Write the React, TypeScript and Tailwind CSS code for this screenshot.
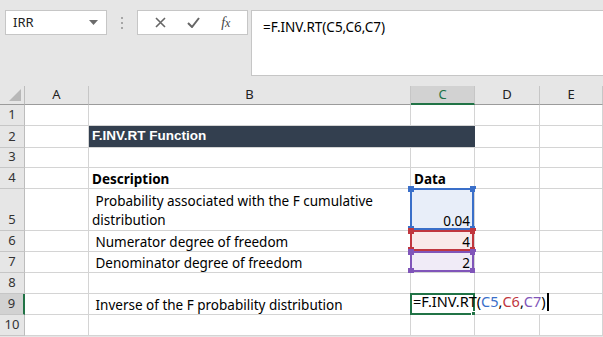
import React from 'react';

const cellFont = { fontFamily: '"Noto Sans", "Open Sans", sans-serif' };

const Corner = ({ pos, color }: { pos: string; color: string }) => (
  <span className={`absolute w-[6px] h-[6px] ${pos} ${color}`} />
);

const RangeBox = ({ border, fill, dot }: { border: string; fill: string; dot: string }) => (
  <div className={`absolute -left-[1px] -top-[1px] -right-[0px] -bottom-[0px] border-2 ${border} ${fill}`}>
    <Corner pos="-left-[4px] -top-[4px]" color={dot} />
    <Corner pos="-right-[4px] -top-[4px]" color={dot} />
    <Corner pos="-left-[4px] -bottom-[4px]" color={dot} />
    <Corner pos="-right-[4px] -bottom-[4px]" color={dot} />
  </div>
);

export default function App() {
  const rows = [1, 2, 3, 4, 5, 6, 7, 8, 9, 10];

  const rowHeader = (n: number) => (
    <div
      key={`h${n}`}
      className={`flex items-end justify-center pb-[1px] text-[13px] text-[#333] border-b border-[#c6c6c6] ${
        n === 9 ? 'bg-[#d2d2d2] border-r-2 border-r-[#217346]' : 'bg-[#e6e6e6] border-r border-r-[#bdbdbd]'
      }`}
      style={cellFont}
    >
      {n}
    </div>
  );

  const cell = (key: string, children?: React.ReactNode, extra = '') => (
    <div key={key} className={`relative border-r border-b border-[#d4d4d4] bg-white ${extra}`}>
      {children}
    </div>
  );

  const cells: React.ReactNode[] = [];
  rows.forEach((n) => {
    cells.push(rowHeader(n));
    // A
    cells.push(cell(`a${n}`));
    // B
    if (n === 2) {
      cells.push(
        <div
          key="b2"
          className="col-span-2 flex items-center pl-[3px] bg-[#333f4f] text-white font-bold text-[13.5px] border-b border-[#d4d4d4]"
          style={{ fontFamily: '"Liberation Sans", Arial, sans-serif' }}
        >
          F.INV.RT Function
        </div>
      );
    } else {
      let content: React.ReactNode = null;
      if (n === 4) content = <span className="font-bold">Description</span>;
      if (n === 5)
        content = (
          <span className="leading-[19px] block">
            &nbsp;Probability associated with the F cumulative
            <br />
            distribution
          </span>
        );
      if (n === 6) content = <span>&nbsp;Numerator degree of freedom</span>;
      if (n === 7) content = <span>&nbsp;Denominator degree of freedom</span>;
      if (n === 9) content = <span>&nbsp;Inverse of the F probability distribution</span>;
      cells.push(
        <div
          key={`b${n}`}
          className="relative flex items-end pl-[3px] text-[13.5px] leading-[18px] text-black border-r border-b border-[#d4d4d4] bg-white whitespace-pre"
          style={cellFont}
        >
          {content}
        </div>
      );
    }
    // C
    if (n !== 2) {
      let c: React.ReactNode = null;
      if (n === 4)
        c = <span className="absolute left-[3px] bottom-0 font-bold text-[13.5px] leading-[18px] z-10">Data</span>;
      if (n === 5)
        c = (
          <>
            <RangeBox border="border-[#3a6fc9]" fill="bg-[#e8eef9]" dot="bg-[#3a6fc9]" />
            <span className="absolute right-[4px] bottom-0 text-[13.5px] leading-[18px] z-10">0.04</span>
          </>
        );
      if (n === 6)
        c = (
          <>
            <RangeBox border="border-[#c0363e]" fill="bg-[#f9e9e9]" dot="bg-[#c0363e]" />
            <span className="absolute right-[4px] bottom-0 text-[13.5px] leading-[18px] z-10">4</span>
          </>
        );
      if (n === 7)
        c = (
          <>
            <RangeBox border="border-[#8055b9]" fill="bg-[#f0ebf7]" dot="bg-[#8055b9]" />
            <span className="absolute right-[4px] bottom-0 text-[13.5px] leading-[18px] z-10">2</span>
          </>
        );
      if (n === 9)
        c = (
          <>
            <div className="absolute -left-[1px] -top-[1px] -right-[1px] -bottom-[1px] border-2 border-[#217346]">
              <span className="absolute -right-[4px] -bottom-[4px] w-[6px] h-[6px] bg-[#217346] border border-white" />
            </div>
            <span className="absolute left-[2px] bottom-[1px] text-[14.5px] whitespace-nowrap z-10 flex items-center">
              =F.INV.RT(
              <span className="text-[#3a6fc9]">C5</span>,
              <span className="text-[#c0363e]">C6</span>,
              <span className="text-[#8055b9]">C7</span>)
              <span className="inline-block w-[2px] h-[18px] bg-black ml-[1px]" />
            </span>
          </>
        );
      cells.push(
        <div key={`c${n}`} className="relative border-r border-b border-[#d4d4d4] bg-white text-black" style={cellFont}>
          {c}
        </div>
      );
    }
    // D
    cells.push(cell(`d${n}`, null, n === 9 ? 'border-r-0' : ''));
    // E
    cells.push(cell(`e${n}`));
  });

  const colHeader = (label: string, selected = false) => (
    <div
      key={`ch${label}`}
      className={`flex items-center justify-center text-[13px] border-r border-[#c6c6c6] ${
        selected ? 'bg-[#d2d2d2] text-[#217346] border-b-2 border-b-[#217346]' : 'bg-[#e6e6e6] text-[#222] border-b border-b-[#9b9b9b]'
      }`}
      style={cellFont}
    >
      {label}
    </div>
  );

  return (
    <div className="w-[603px] h-[337px] overflow-hidden bg-[#e6e6e6] select-none">
      {/* formula bar area */}
      <div className="flex h-[86px] pt-[10px] pl-[5px]">
        <div className="flex items-start">
          <div
            className="w-[102px] h-[25px] bg-white border border-[#c6c6c6] flex items-center justify-between pl-[7px] pr-[8px] text-[13px] text-[#222]"
            style={cellFont}
          >
            IRR
            <svg width="9" height="5" viewBox="0 0 9 5">
              <path d="M0 0h9L4.5 5z" fill="#6b6b6b" />
            </svg>
          </div>
          <div className="w-[30px] h-[25px] flex flex-col items-center justify-center gap-[3px]">
            <span className="w-[2px] h-[2px] bg-[#a6a6a6]" />
            <span className="w-[2px] h-[2px] bg-[#a6a6a6]" />
            <span className="w-[2px] h-[2px] bg-[#a6a6a6]" />
          </div>
          <div className="w-[111px] h-[25px] bg-white border border-[#c6c6c6] flex items-center justify-around px-[6px]">
            <svg width="11" height="11" viewBox="0 0 11 11">
              <path d="M1 1l9 9M10 1l-9 9" stroke="#666" strokeWidth="1.6" />
            </svg>
            <svg width="13" height="11" viewBox="0 0 13 11">
              <path d="M1 6l4 4 7-9" stroke="#666" strokeWidth="2" fill="none" />
            </svg>
            <span
              className="text-[14px] text-[#444] italic"
              style={{ fontFamily: '"Liberation Serif", "Times New Roman", serif' }}
            >
              f<span className="text-[12px]">x</span>
            </span>
          </div>
          <div className="w-[3px]" />
        </div>
        <div
          className="flex-1 h-[66px] bg-white border border-[#c6c6c6] border-r-0 pl-[11px] pt-[6px] text-[13.5px] text-black"
          style={cellFont}
        >
          =F.INV.RT(C5,C6,C7)
        </div>
      </div>

      {/* sheet */}
      <div className="grid grid-cols-[25px_64px_322px_64px_65px_63px] grid-rows-[19px_21px_22px_20px_21px_42px_21px_21px_21px_21px_21px]">
        <div className="relative bg-[#e6e6e6] border-r border-r-[#bdbdbd] border-b border-b-[#9b9b9b]">
          <svg className="absolute right-[3px] bottom-[3px]" width="12" height="12" viewBox="0 0 12 12">
            <path d="M12 0V12H0z" fill="#b8b8b8" />
          </svg>
        </div>
        {colHeader('A')}
        {colHeader('B')}
        {colHeader('C', true)}
        {colHeader('D')}
        {colHeader('E')}
        {cells}
      </div>
    </div>
  );
}
